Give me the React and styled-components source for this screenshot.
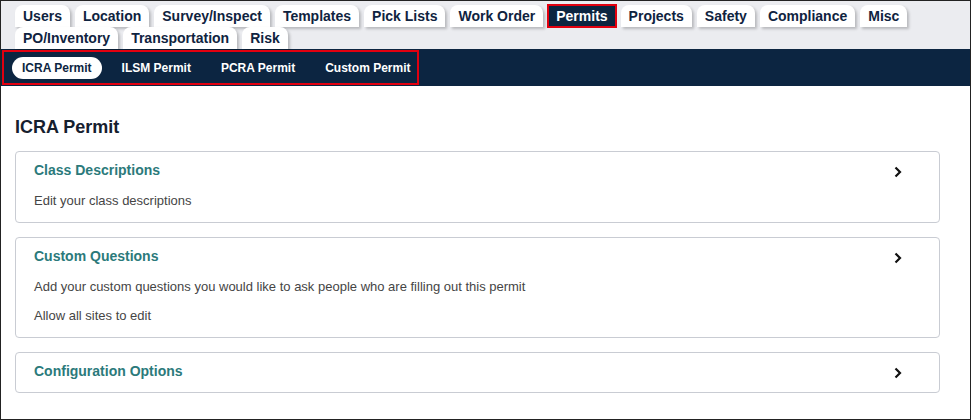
import React, { useState } from 'react';
import styled, { createGlobalStyle } from 'styled-components';

const GlobalStyle = createGlobalStyle`
  * { box-sizing: border-box; }
  html, body { margin: 0; padding: 0; background: #fff; }
  body { font-family: Arial, 'Liberation Sans', sans-serif; }
`;

const Frame = styled.div`
  width: 971px;
  height: 420px;
  border: 1px solid #222;
  overflow: hidden;
  background: #fff;
`;

const StripBg = styled.div`
  background: #ebecf0;
`;

const TabStrip = styled.div`
  padding: 4px 0 0 14px;
  display: flex;
  flex-wrap: wrap;
  width: 925px;
`;

const Tab = styled.button`
  height: 22px;
  margin-right: 5px;
  padding: 0 8px;
  border: none;
  border-radius: 8px 8px 0 0;
  background: #fff;
  color: #0f2340;
  font-family: Arial, 'Liberation Sans', sans-serif;
  font-size: 14px;
  font-weight: 700;
  line-height: 22px;
  box-shadow: 2px 2px 3px rgba(0, 0, 0, 0.22);
  cursor: pointer;

  ${props => props.active && `
    background: #0c2540;
    color: #fff;
    border-radius: 0;
    outline: 2px solid #e3000f;
    outline-offset: -1px;
    box-shadow: none;
  `}
`;

const SubNav = styled.div`
  background: #0c2541;
  height: 37px;
  padding: 1px 0 0 1px;
`;

const SubNavGroup = styled.div`
  display: inline-flex;
  align-items: center;
  gap: 10px;
  height: 35px;
  padding: 0 0 0 8px;
  border: 2px solid #e3000f;
`;

const SubTab = styled.button`
  height: 22px;
  padding: 0 10px;
  border: none;
  border-radius: 11px;
  background: ${props => (props.active ? '#fff' : 'transparent')};
  color: ${props => (props.active ? '#0c2541' : '#fff')};
  font-family: Arial, 'Liberation Sans', sans-serif;
  font-size: 12px;
  font-weight: 700;
  cursor: pointer;

  &:last-child {
    padding-right: 6px;
  }
`;

const Content = styled.div`
  padding: 30px 30px 0 14px;
`;

const Heading = styled.h2`
  margin: 0 0 13px 0;
  font-size: 18px;
  line-height: 22px;
  font-weight: 700;
  color: #16202e;
`;

const CardList = styled.div`
  display: flex;
  flex-direction: column;
  gap: 14px;
`;

const Card = styled.div`
  display: flex;
  align-items: flex-start;
  border: 1px solid #c9ccd3;
  border-radius: 4px;
  padding: 10px 0 13px 18px;
  cursor: pointer;
`;

const CardBody = styled.div`
  flex: 1;
  display: flex;
  flex-direction: column;
  gap: 13px;
`;

const CardTitle = styled.div`
  font-size: 14px;
  font-weight: 700;
  line-height: 16px;
  color: #2b7a7b;
`;

const CardText = styled.div`
  font-size: 13px;
  line-height: 16px;
  color: #454545;

  ${CardTitle} + & {
    margin-top: 2px;
  }
`;

const Chevron = styled.div`
  width: 12px;
  height: 12px;
  margin: 4px 35px 0 0;
  display: flex;
  align-items: center;
  justify-content: center;
`;

const mainTabs = [
  'Users', 'Location', 'Survey/Inspect', 'Templates', 'Pick Lists', 'Work Order',
  'Permits', 'Projects', 'Safety', 'Compliance', 'Misc',
  'PO/Inventory', 'Transportation', 'Risk'
];

const permitTabs = ['ICRA Permit', 'ILSM Permit', 'PCRA Permit', 'Custom Permit'];

const sections = [
  { title: 'Class Descriptions', lines: ['Edit your class descriptions'] },
  {
    title: 'Custom Questions',
    lines: [
      'Add your custom questions you would like to ask people who are filling out this permit',
      'Allow all sites to edit'
    ]
  },
  { title: 'Configuration Options', lines: [] }
];

function ChevronRight() {
  return (
    <svg width="8" height="12" viewBox="0 0 8 12">
      <polyline points="1.5,1.5 6,6 1.5,10.5" fill="none" stroke="#111" strokeWidth="2.2" />
    </svg>
  );
}

export default function App() {
  const [tab, setTab] = useState('Permits');
  const [permit, setPermit] = useState('ICRA Permit');

  return (
    <>
      <GlobalStyle />
      <Frame>
        <StripBg>
          <TabStrip>
            {mainTabs.map(t => (
              <Tab key={t} active={t === tab} onClick={() => setTab(t)}>
                {t}
              </Tab>
            ))}
          </TabStrip>
        </StripBg>
        <SubNav>
          <SubNavGroup>
            {permitTabs.map(p => (
              <SubTab key={p} active={p === permit} onClick={() => setPermit(p)}>
                {p}
              </SubTab>
            ))}
          </SubNavGroup>
        </SubNav>
        <Content>
          <Heading>{permit}</Heading>
          <CardList>
            {sections.map(s => (
              <Card key={s.title}>
                <CardBody>
                  <CardTitle>{s.title}</CardTitle>
                  {s.lines.map(line => (
                    <CardText key={line}>{line}</CardText>
                  ))}
                </CardBody>
                <Chevron>
                  <ChevronRight />
                </Chevron>
              </Card>
            ))}
          </CardList>
        </Content>
      </Frame>
    </>
  );
}
